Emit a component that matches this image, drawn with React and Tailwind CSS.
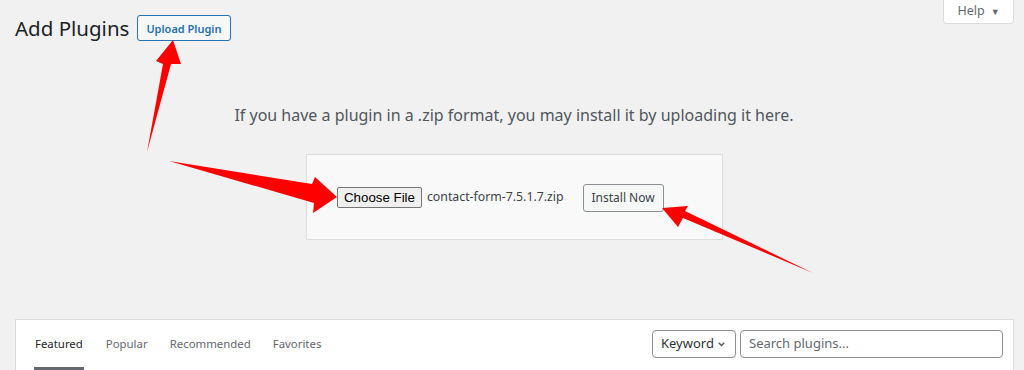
import React from 'react';

const font = { fontFamily: '"Noto Sans", "Open Sans", sans-serif' };

const Arrows = () => (
    <svg className="absolute inset-0 pointer-events-none" width="1024" height="370" viewBox="0 0 1024 370">
        <polygon points="147,152 163,64 156,61 173,40 181,64 171,64" fill="#ff0000" />
        <polygon points="169,161 312,184 315,177 337,197 313,213 314,203" fill="#ff0000" />
        <polygon points="813,273 683,218 678,227 662,208 688,206 685,211" fill="#ff0000" />
    </svg>
);

const App = () => {
    return (
        <div className="relative w-[1024px] h-[370px] overflow-hidden bg-[#f1f1f1] text-[#3c434a]" style={font}>
            <div className="flex items-start pl-[15px] pr-[10px]">
                <div className="flex items-center gap-[8px] pt-[15px]">
                    <h1 className="text-[20.5px] leading-[26px] text-[#1d2327] font-normal">Add Plugins</h1>
                    <button className="h-[26px] px-[8px] border border-[#2271b1] rounded-[3px] bg-[#f6f7f7] text-[#2271b1] text-[11px] font-semibold leading-none">
                        Upload Plugin
                    </button>
                </div>
                <button className="ml-auto h-[24px] w-[71px] flex items-center justify-center gap-[6px] bg-white border border-t-0 border-[#dcdcde] rounded-b-[4px] text-[12.5px] text-[#646970]">
                    Help <span className="text-[9px]">▼</span>
                </button>
            </div>

            <p className="mt-[62px] text-center pl-[4px] text-[16px] text-[#50575e]">
                If you have a plugin in a .zip format, you may install it by uploading it here.
            </p>

            <div className="ml-[306px] mt-[27px] w-[417px] h-[86px] bg-[#f9f9f9] border border-[#dcdcde] flex items-center pl-[30px]">
                <div className="flex items-center">
                    <button className="h-[21px] px-[6px] bg-[#efefef] border border-[#767676] rounded-[2px] text-[13.3px] text-black" style={{ fontFamily: '"Liberation Sans", Arial, sans-serif' }}>
                        Choose File
                    </button>
                    <span className="ml-[5px] text-[12.3px] text-[#3c434a]">contact-form-7.5.1.7.zip</span>
                </div>
                <button className="ml-[19px] mt-[2px] h-[28px] w-[81px] bg-[#f6f7f7] border border-[#8c8f94] rounded-[3px] text-[12px] text-[#3c434a]">
                    Install Now
                </button>
            </div>

            <div className="ml-[15px] mr-[10px] mt-[79px] h-[60px] bg-white border border-[#dcdcde] flex items-start pl-[18px] pr-[10px]">
                <nav className="flex gap-[22px] text-[11.4px] text-[#646970] pt-[15px]">
                    <span className="text-[#1d2327] px-[1px] pb-[15px] border-b-[4px] border-[#646970]">Featured</span>
                    <span>Popular</span>
                    <span>Recommended</span>
                    <span>Favorites</span>
                </nav>
                <div className="ml-auto flex gap-[4px] pt-[10px]">
                    <div className="h-[28px] w-[84px] flex items-center justify-between pl-[8px] pr-[8px] border border-[#8c8f94] rounded-[4px] text-[13px] text-[#2c3338]">
                        Keyword
                        <svg width="11" height="11" viewBox="0 0 20 20"><path d="M5 7l5 5 5-5" stroke="#50575e" strokeWidth="2.5" fill="none" /></svg>
                    </div>
                    <div className="h-[28px] w-[263px] flex items-center px-[8px] border border-[#8c8f94] rounded-[4px] text-[13px] text-[#646970]">
                        Search plugins...
                    </div>
                </div>
            </div>

            <Arrows />
        </div>
    );
};

export default App;
